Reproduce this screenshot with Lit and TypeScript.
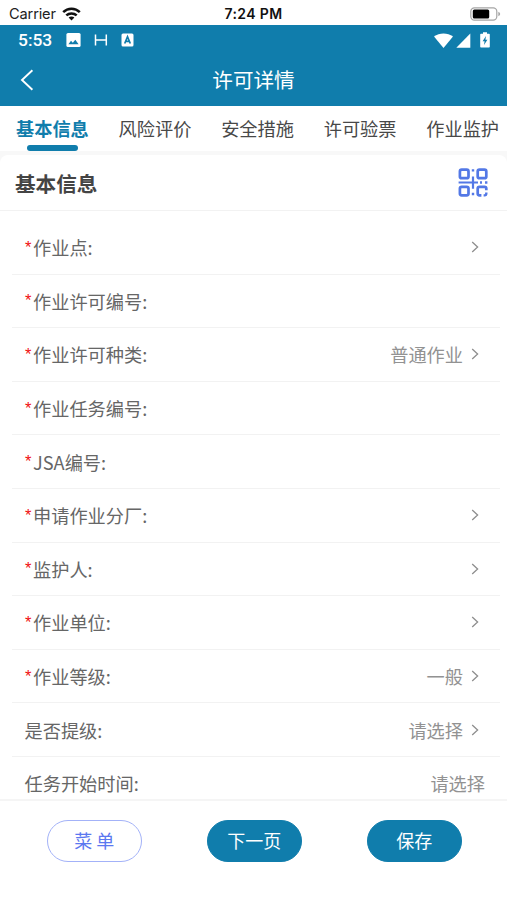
import { LitElement, html, css, svg, nothing } from "lit";
import { customElement, property } from "lit/decorators.js";

const chevron = svg`<path d="M1.2 1 L6.6 6 L1.2 11" fill="none" stroke="#8e8e8e" stroke-width="1.3"/>`;

interface Field {
  label: string;
  required?: boolean;
  value?: string;
  arrow?: boolean;
}

const TABS = ["基本信息", "风险评价", "安全措施", "许可验票", "作业监护"];

const FIELDS: Field[] = [
  { label: "作业点:", required: true, arrow: true },
  { label: "作业许可编号:", required: true },
  { label: "作业许可种类:", required: true, value: "普通作业", arrow: true },
  { label: "作业任务编号:", required: true },
  { label: "JSA编号:", required: true },
  { label: "申请作业分厂:", required: true, arrow: true },
  { label: "监护人:", required: true, arrow: true },
  { label: "作业单位:", required: true, arrow: true },
  { label: "作业等级:", required: true, value: "一般", arrow: true },
  { label: "是否提级:", value: "请选择", arrow: true },
  { label: "任务开始时间:", value: "请选择" },
];

@customElement("form-row")
class FormRow extends LitElement {
  @property({ attribute: false }) field!: Field;

  static styles = css`
    :host {
      display: flex;
      align-items: center;
      box-sizing: border-box;
      flex: none;
      height: 53.6px;
      margin: 0 7px 0 12px;
      padding: 0 16px 0 12.5px;
      border-bottom: 1px solid #f2f2f2;
      font-size: 18.2px;
      line-height: 26px;
      color: #666;
      white-space: nowrap;
    }
    .star { color: #f01010; width: 8px; padding: 0 0 1px 0.5px; font-size: 16.5px; font-family: "Liberation Sans", sans-serif; flex: none; }
    .value { margin-left: auto; color: #929292; }
    .arrow { margin-left: auto; margin-right: 5px; display: block; flex: none; }
    .value + .arrow { margin-left: 8px; }
    .value:last-child { margin-right: -1px; }
  `;

  render() {
    const f = this.field;
    return html`${f.required ? html`<span class="star">*</span>` : nothing}<span>${f.label}</span>
      ${f.value ? html`<span class="value">${f.value}</span>` : nothing}
      ${f.arrow ? html`<svg class="arrow" width="8" height="12" viewBox="0 0 8 12">${chevron}</svg>` : nothing}`;
  }
}

@customElement("app-root")
class AppRoot extends LitElement {
  static styles = css`
    :host {
      display: flex;
      flex-direction: column;
      width: 507px;
      height: 900px;
      overflow: hidden;
      background: #fff;
      font-family: "Noto Sans CJK SC", sans-serif;
    }
    svg { display: block; flex: none; }
    .carrier {
      display: grid;
      grid-template-columns: 1fr auto 1fr;
      align-items: center;
      height: 25px;
      flex: none;
      box-sizing: border-box;
      padding: 2px 6px 0 9px;
      font: 14.6px/20px Inter, sans-serif;
      color: #222;
    }
    .left { display: flex; align-items: center; gap: 6px; }
    .name { letter-spacing: -0.15px; }
    .clock { font-weight: 600; font-size: 14px; letter-spacing: 0.4px; color: #111; margin-right: 3px; }
    .battery { justify-self: end; }
    .header { height: 80.5px; flex: none; background: #107dac; color: #fff; }
    .status {
      display: flex;
      align-items: center;
      height: 30px;
      padding: 0 17px 0 18px;
    }
    .time { font: 500 17.4px/20px Roboto, sans-serif; width: 48px; }
    .status svg { margin-right: 13px; }
    .status .spacer { flex: 1; }
    .status .wifi { margin-right: 3px; }
    .status .signal { margin-right: 9px; }
    .status .cell { margin-right: 0; }
    .nav {
      display: grid;
      grid-template-columns: 1fr auto 1fr;
      align-items: center;
      height: 49px;
      padding: 0 20px;
      font-size: 20.6px;
      line-height: 30px;
    }
    .title { padding-bottom: 2px; }
    .tabs {
      display: flex;
      gap: 29.8px;
      height: 45.5px;
      flex: none;
      box-sizing: border-box;
      padding-left: 16px;
      font-size: 18.2px;
      line-height: 26px;
      color: #484848;
      white-space: nowrap;
    }
    .tab { display: flex; flex-direction: column; align-items: center; padding-top: 9.8px; flex: none; }
    .tab.active { color: #107dac; font-weight: 700; }
    .bar { width: 51.5px; height: 6px; flex: none; border-radius: 3px; background: #107dac; margin-top: 4px; }
    .body { flex: 1; min-height: 0; background: #f8f8f8; padding-top: 4px; overflow: hidden; }
    .card { background: #fff; border-radius: 8px 8px 0 0; display: flex; flex-direction: column; }
    .heading {
      display: flex;
      align-items: center;
      justify-content: space-between;
      box-sizing: border-box;
      height: 56px;
      padding: 0 19px 0 15px;
      border-bottom: 1px solid #f2f2f2;
      font-size: 20.6px;
      line-height: 30px;
      font-weight: 700;
      color: #444;
    }
    .list { display: flex; flex-direction: column; padding-top: 10px; }
    .footer {
      display: flex;
      gap: 65.5px;
      height: 101.5px;
      flex: none;
      box-sizing: border-box;
      border-top: 2px solid #f5f5f5;
      padding: 19px 0 0 47px;
      background: #fff;
    }
    .btn {
      box-sizing: border-box;
      width: 94.5px;
      height: 42px;
      border: 1px solid #107dac;
      border-radius: 21px;
      background: #107dac;
      color: #fff;
      font: 400 18px/38px "Noto Sans CJK SC", sans-serif;
      padding: 0 0 2px;
      text-align: center;
    }
    .btn.plain { background: #fff; color: #5b78f0; border-color: #a3b2f8; }
  `;

  render() {
    return html`
      <div class="carrier">
        <div class="left">
          <span class="name">Carrier</span>
          <svg width="19" height="14" viewBox="0 0 19 14" fill="none" stroke="#111" stroke-width="2.5">
            <path d="M1.2 5.2 C5.8 0.6 13.2 0.6 17.8 5.2"/>
            <path d="M4.3 8.4 C7.2 5.7 11.8 5.7 14.7 8.4"/>
            <path d="M6.6 10.6 C8.2 9.2 10.8 9.2 12.4 10.6 L9.5 13.6 Z" fill="#111" stroke="none"/>
          </svg>
        </div>
        <span class="clock">7:24 PM</span>
        <svg class="battery" width="31" height="14" viewBox="0 0 31 14">
          <rect x="0.8" y="0.8" width="26" height="12.4" rx="3.6" fill="none" stroke="#a5a5a5" stroke-width="1.2"/>
          <rect x="2.8" y="2.6" width="16.4" height="8.8" rx="1.5" fill="#000"/>
          <path d="M28.3 4.8 Q30.2 5.6 30.2 7 Q30.2 8.4 28.3 9.2Z" fill="#a5a5a5"/>
        </svg>
      </div>
      <div class="header">
        <div class="status">
          <span class="time">5:53</span>
          <svg width="15" height="14" viewBox="0 0 15 14">
            <rect x="0.4" width="14.2" height="14" rx="1.6" fill="#fff"/>
            <path d="M2.4 11.2 L5 7.7 L6.8 9.7 L9.3 6.8 L12.6 11.2Z" fill="#107dac"/>
          </svg>
          <svg width="14" height="12" viewBox="0 0 14 12" fill="none" stroke="#fff" stroke-width="1.5">
            <path d="M1.5 0.5 V11.5 M12.3 0.5 V11.5 M1.5 6 H12.3"/>
          </svg>
          <svg width="13" height="14" viewBox="0 0 13 14">
            <rect x="0.5" y="0.5" width="12" height="13" rx="1.5" fill="#fff"/>
            <path d="M3.7 10.5 L6.5 3.7 L9.3 10.5 M4.7 8.4 H8.3" fill="none" stroke="#107dac" stroke-width="1.7"/>
          </svg>
          <span class="spacer"></span>
          <svg class="wifi" width="19" height="15" viewBox="0 0 19 15"><path d="M0 3.6 C5.5 -0.7 13.5 -0.7 19 3.6 L9.5 15Z" fill="#fff"/></svg>
          <svg class="signal" width="15" height="15" viewBox="0 0 15 15"><path d="M14.3 0.5 V14.7 H0.3Z" fill="#fff"/></svg>
          <svg class="cell" width="10" height="16" viewBox="0 0 10 16">
            <path d="M3 0.2 H7 V1.8 H9 Q9.8 1.8 9.8 2.6 V14.8 Q9.8 15.6 9 15.6 H1 Q0.2 15.6 0.2 14.8 V2.6 Q0.2 1.8 1 1.8 H3Z" fill="#fff"/>
            <path d="M6 4 L2.6 9.3 H4.6 L4 13 L7.4 7.8 H5.4Z" fill="#107dac"/>
          </svg>
        </div>
        <div class="nav">
          <svg width="14" height="22" viewBox="0 0 14 22"><path d="M12.4 1.3 L2 11 L12.4 20.7" fill="none" stroke="#fff" stroke-width="1.9"/></svg>
          <span class="title">许可详情</span>
        </div>
      </div>
      <div class="tabs">
        ${TABS.map(
          (t, i) => html`<div class="tab ${i === 0 ? "active" : ""}"><span>${t}</span>${i === 0 ? html`<i class="bar"></i>` : nothing}</div>`
        )}
      </div>
      <div class="body">
        <div class="card">
          <div class="heading">
            <span>基本信息</span>
            <svg width="30" height="29" viewBox="0 0 30 29" fill="none" stroke="#5378e6" stroke-width="2.7">
              <rect x="1.9" y="1.6" width="8.6" height="8.6" rx="1.8"/>
              <rect x="19.7" y="1.6" width="8.6" height="8.6" rx="1.8"/>
              <rect x="1.9" y="18.8" width="8.6" height="8.6" rx="1.8"/>
              <path d="M0.6 14.5 H20 M15 8.4 V20.8" stroke-width="2.2"/>
              <path d="M13.8 2.4 H16.2 M13.8 26 H16.2 M22 14.5 H24 M27 14.5 H29.4" stroke-width="2.4"/>
              <path d="M28.3 22.2 V20.6 Q28.3 18.8 26.5 18.8 H21.5 Q19.7 18.8 19.7 20.6 V25.6 Q19.7 27.4 21.5 27.4 H23.4"/>
              <path d="M25.6 27.4 H26.6 Q28.3 27.2 28.3 25.4 V24.6" stroke-width="2.4"/>
            </svg>
          </div>
          <div class="list">${FIELDS.map((f) => html`<form-row .field=${f}></form-row>`)}</div>
        </div>
      </div>
      <div class="footer">
        <button class="btn plain">菜 单</button>
        <button class="btn">下一页</button>
        <button class="btn">保存</button>
      </div>
    `;
  }
}
